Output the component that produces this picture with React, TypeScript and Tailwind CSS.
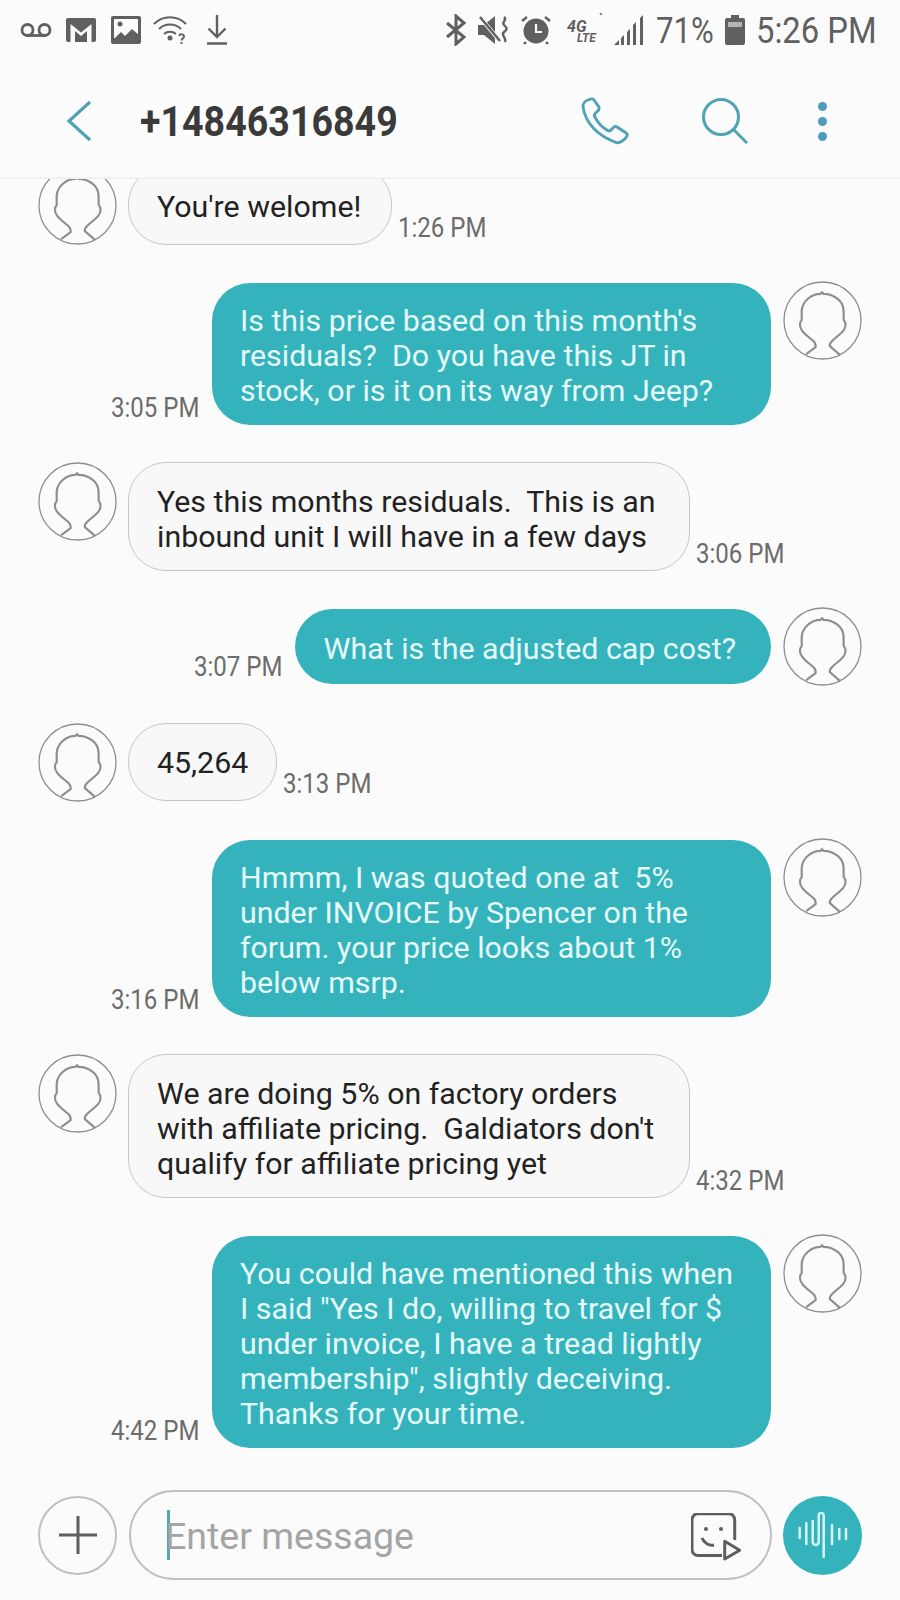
const roboto = { fontFamily: 'Roboto, "Liberation Sans", sans-serif' }

function StatusIcons() {
  return (
    <div className="flex items-center">
      <svg width="32" height="14" viewBox="0 0 32 14" fill="none" stroke="#606060" strokeWidth="2.8" className="ml-[20px]">
        <circle cx="7.5" cy="7" r="5.5" />
        <circle cx="24.5" cy="7" r="5.5" />
        <path d="M7.5 12.5h17" />
      </svg>
      <svg width="30" height="24" viewBox="0 0 30 24" className="ml-[14px]">
        <rect width="30" height="24" rx="2" fill="#606060" />
        <path d="M4.500 24V6l10.500 8.500L25.500 6v18z" fill="#fbfbfb" />
        <path d="M9 24V13l6 5 6-5v11z" fill="#606060" />
      </svg>
      <svg width="30" height="28" viewBox="0 0 30 28" className="ml-[15px]">
        <rect width="30" height="28" rx="2" fill="#606060" />
        <rect x="3" y="3" width="24" height="19" fill="#fbfbfb" />
        <circle cx="9" cy="8" r="2.500" fill="#606060" />
        <path d="M2 24l8-8 4 4 7-7 7 6v9H2z" fill="#606060" />
      </svg>
      <svg width="36" height="30" viewBox="0 0 36 30" fill="none" stroke="#606060" strokeWidth="2" className="ml-[12px]">
        <path d="M1 9c9-9 23-9 32 0M6 14c6-6 16-6 22 0M11 19c3.500-3 8.500-3 12 0" />
        <circle cx="17" cy="23" r="2.500" fill="#606060" stroke="none" />
        <path d="M26 21c1-2.500 5-2 5 .5 0 2-2.500 2-2.500 4M28.500 27v2" />
      </svg>
      <svg width="22" height="30" viewBox="0 0 22 30" fill="none" stroke="#606060" strokeWidth="2.400" className="ml-[17px]">
        <path d="M11 0v22M2.500 13.500L11 22l8.500-8.500M1 28.500h20" />
      </svg>
    </div>
  )
}

function StatusRight() {
  return (
    <div className="flex items-center">
      <svg width="22" height="32" viewBox="0 0 22 32" fill="none" stroke="#606060" strokeWidth="3">
        <path d="M2 9l17 14-8 7V2l8 7L2 23" />
      </svg>
      <svg width="34" height="30" viewBox="0 0 34 30" className="ml-[10px]">
        <path d="M1 10h6L18 1v28L7 20H1z" fill="#606060" />
        <path d="M2 1l20 24" stroke="#fbfbfb" strokeWidth="4" />
        <path d="M3 2l20 24" stroke="#606060" strokeWidth="2.500" />
        <path d="M27 2c4 3-3 5 0 8s4 4 0 7 3 6 1 10" stroke="#606060" strokeWidth="2.400" fill="none" />
      </svg>
      <svg width="30" height="30" viewBox="0 0 30 30" className="ml-[10px]">
        <circle cx="15" cy="16" r="12.500" fill="#606060" />
        <path d="M15 9v8h6" stroke="#fbfbfb" strokeWidth="2.200" fill="none" />
        <path d="M1 6l5-4M29 6l-5-4M5 27l-2 2M25 27l2 2" stroke="#606060" strokeWidth="2.400" />
      </svg>
      <div className="relative ml-[16px] w-[34px] h-[30px] italic font-bold text-[#606060]" style={roboto}>
        <span className="absolute left-0 top-[6px] text-[16px] leading-[12px]">4G</span>
        <span className="absolute left-[10px] top-[19px] text-[12px] leading-[9px]">LTE</span>
        <span className="absolute left-[31px] top-[-2px] text-[13px] leading-[12px]">`</span>
      </div>
      <svg width="30" height="30" viewBox="0 0 30 30" fill="#606060" className="ml-[13px]">
        <path d="M0 30l5-5v5zM7 23l3-3v10H7zM13 17l3-3v16h-3zM19 10l3-3v23h-3zM26 3l3-3v30h-3z" />
      </svg>
      <span className="ml-[12px] text-[37px] leading-none text-[#606060] scale-x-[0.84] origin-left w-[59px] whitespace-nowrap" style={roboto}>71%</span>
      <svg width="20" height="30" viewBox="0 0 20 30" className="ml-[10px]">
        <path d="M6 0h8v3h4a2 2 0 0 1 2 2v23a2 2 0 0 1-2 2H2a2 2 0 0 1-2-2V5a2 2 0 0 1 2-2h4z" fill="#606060" />
        <rect x="3" y="7" width="14" height="5" fill="#b4b4b4" />
      </svg>
      <span className="ml-[11px] text-[37px] leading-none text-[#606060] scale-x-[0.886] origin-left w-[119px] whitespace-nowrap" style={roboto}>5:26 PM</span>
    </div>
  )
}

function Avatar() {
  return (
    <svg width="79" height="79" viewBox="0 0 80 80" fill="none" stroke="#8e8e8e" className="shrink-0">
      <circle cx="40" cy="40" r="39" strokeWidth="1.300" />
      <path
        strokeWidth="2.200"
        d="M23.500 74L33 67C33.500 64 33 63 31 61C27 57.500 22 54 19.500 50.500C16.500 47 16.500 42 19 39.500C19 36 18.800 33 19 29.500C20 20 29 13 38 13L39.500 11.500L41 13C51 13 61 20 61.300 29.500C61.500 33 61.300 36 61.500 39.500C64 42 64 47 61 50.500C58 54 53 57.500 49.500 61C47.500 63 47 64 47.500 66L57.900 75"
      />
    </svg>
  )
}

function Time({ label }: { label: string }) {
  return (
    <span className="text-[27px] leading-[34px] text-[#6c6c6c] whitespace-nowrap inline-block w-[88px] scale-x-[0.89] origin-left" style={roboto}>
      {label}
    </span>
  )
}

function Sent({ lines, time, single = false }: { lines: string[]; time: string; single?: boolean }) {
  return (
    <div className="flex justify-end items-start gap-[12px]">
      <div className="flex items-end gap-[13px] mt-[2px]">
        <Time label={time} />
        <div className={`rounded-[38px] bg-[#35b3bd] text-[#e6fafa] text-[30.350px] leading-[35px] whitespace-pre ${single ? 'pt-[21.500px] pb-[18.500px] pl-[29px] pr-[35px]' : 'w-[559px] pt-[20px] pb-[17px] px-[28px]'}`}>
          {lines.join('\n')}
        </div>
      </div>
      <Avatar />
    </div>
  )
}

function Received({ lines, time, bubble, className = '' }: { lines: string[]; time: string; bubble: string; className?: string }) {
  return (
    <div className={`flex items-start gap-[11px] ${className}`}>
      <Avatar />
      <div className="flex items-end gap-[6px]">
        <div className={`rounded-[38px] border border-[#c6c6c6] bg-[#f8f8f8] text-[#222222] text-[30.350px] leading-[35px] whitespace-pre ${bubble}`}>
          {lines.join('\n')}
        </div>
        <Time label={time} />
      </div>
    </div>
  )
}

export default function App() {
  return (
    <div className="h-[1600px] w-[900px] flex flex-col bg-[#fbfbfb] overflow-hidden" style={roboto}>
      <div className="h-[60px] shrink-0 flex items-center justify-between pr-[25px] pl-0">
        <StatusIcons />
        <StatusRight />
      </div>

      <div className="h-[119px] shrink-0 flex items-center border-b-2 border-[#eef0f1] bg-[#fcfcfc] pt-[5px]">
        <svg width="26" height="42" viewBox="0 0 26 42" fill="none" stroke="#4fa3b3" strokeWidth="3.200" className="ml-[66px]">
          <path d="M24 2L3 21l21 19" />
        </svg>
        <h1 className="ml-[48px] mt-[2px] w-[445px] text-[42px] leading-none font-bold text-[#3a3a3a] scale-x-[0.895] origin-left">+14846316849</h1>
        <svg width="48" height="48" viewBox="0 0 50 50" fill="none" stroke="#4fa3b3" strokeWidth="3" className="-ml-[4px]">
          <path d="M9 2.500c-4 1-7 4-7 7 1 8 5 17 12 24 7 7 15 11 23 14 3 1 9-3 11-7 .5-1.500 0-2.500-1-3l-9-6c-1.500-1-3-1-4 0l-3 3c-1 1-2 1-3 .5-6-3-11-9-14-15-.5-1 0-2 1-3l3-3c1-1 1-2.500.5-4l-5-7c-1-1-2.500-1.500-4.500-.500z" />
        </svg>
        <svg width="46" height="46" viewBox="0 0 46 46" fill="none" stroke="#4fa3b3" strokeWidth="3" className="ml-[73px]">
          <circle cx="19" cy="19" r="17.500" />
          <path d="M31.500 31.500L45 45" />
        </svg>
        <div className="ml-[70px] flex flex-col gap-[6px]">
          <span className="w-[9px] h-[9px] rounded-full bg-[#4c9dbd]" />
          <span className="w-[9px] h-[9px] rounded-full bg-[#4c9dbd]" />
          <span className="w-[9px] h-[9px] rounded-full bg-[#4c9dbd]" />
        </div>
      </div>

      <div className="flex-1 min-h-0 overflow-hidden pl-[38px] pr-[38px] flex flex-col gap-[36.500px]">
        <Received className="-mt-[13.500px]" bubble="pt-[22.500px] pb-[19.500px] pl-[28px] pr-[30px]" lines={["You're welome!"]} time="1:26 PM" />
        <Sent lines={["Is this price based on this month's", 'residuals?  Do you have this JT in', 'stock, or is it on its way from Jeep?']} time="3:05 PM" />
        <Received bubble="w-[562px] pt-[21px] pb-[16px] px-[28px]" lines={['Yes this months residuals.  This is an', 'inbound unit I will have in a few days']} time="3:06 PM" />
        <Sent single lines={['What is the adjusted cap cost?']} time="3:07 PM" />
        <Received bubble="pt-[21.500px] pb-[19.500px] px-[28px]" lines={['45,264']} time="3:13 PM" />
        <Sent lines={['Hmmm, I was quoted one at  5%', 'under INVOICE by Spencer on the', 'forum. your price looks about 1%', 'below msrp.']} time="3:16 PM" />
        <Received bubble="w-[562px] pt-[21px] pb-[16px] px-[28px]" lines={['We are doing 5% on factory orders', "with affiliate pricing.  Galdiators don't", 'qualify for affiliate pricing yet']} time="4:32 PM" />
        <Sent lines={['You could have mentioned this when', 'I said "Yes I do, willing to travel for $', 'under invoice, I have a tread lightly', 'membership", slightly deceiving.', 'Thanks for your time.']} time="4:42 PM" />
      </div>

      <div className="h-[90px] shrink-0 mb-[20px] flex items-center pl-[38px] gap-[12px]">
        <div className="w-[79px] h-[79px] rounded-full border-2 border-[#c0c0c0] flex items-center justify-center">
          <svg width="38" height="38" viewBox="0 0 38 38" stroke="#5e5e5e" strokeWidth="3">
            <path d="M19 0v38M0 19h38" />
          </svg>
        </div>
        <div className="w-[643px] h-[90px] rounded-[45px] border-2 border-[#c0c0c0] flex items-center pl-[36px]">
          <span className="w-[3px] h-[50px] bg-[#4fa9ba]" />
          <span className="-ml-[5px] mt-[3px] w-[511px] text-[37.500px] leading-none text-[#a4a4a4]">Enter message</span>
          <svg width="50" height="48" viewBox="0 0 50 48" fill="none" stroke="#5e5e5e" strokeWidth="3" className="ml-[15px] mt-[3px]">
            <path d="M31 42.500H7a6 6 0 0 1-6-6V6.700a6 6 0 0 1 6-6h30.700a6 6 0 0 1 6 6V27" />
            <path d="M11 25c2 5 7 8 12 7" />
            <circle cx="15" cy="16" r="2" fill="#5e5e5e" stroke="none" />
            <circle cx="30" cy="16" r="2" fill="#5e5e5e" stroke="none" />
            <path d="M33.700 28.300l15 9-15 8.700z" strokeLinejoin="round" />
          </svg>
        </div>
        <div className="-ml-[1px] w-[79px] h-[79px] rounded-full bg-[#35b3bd] flex items-center justify-center">
          <svg width="50" height="46" viewBox="0 0 50 46" fill="none" stroke="#d6f3f3" strokeWidth="2.500" strokeLinecap="round">
            <path d="M1.700 16v10M8.300 11v21M14.700 9v21a3 3 0 0 0 6 0V3.500a2.500 2.500 0 0 1 5 0V45M34 13v19M41.300 17v10M48 17v10" />
          </svg>
        </div>
      </div>
    </div>
  )
}
